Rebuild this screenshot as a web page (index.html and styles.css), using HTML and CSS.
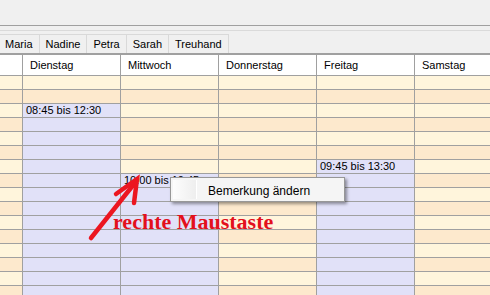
FILE: index.html
```html
<!DOCTYPE html>
<html lang="de">
<head>
    <meta charset="UTF-8">
    <title>Wochenplan</title>
    <link rel="stylesheet" href="styles.css">
</head>
<body>
    <div class="window">
        <div class="toolbar"></div>

        <div class="tabbar">
            <ul class="tabs">
                <li class="tab">Maria</li>
                <li class="tab">Nadine</li>
                <li class="tab">Petra</li>
                <li class="tab">Sarah</li>
                <li class="tab">Treuhand</li>
            </ul>
        </div>

        <div class="planner">
            <div class="row head">
                <div class="cell"></div>
                <div class="cell">Dienstag</div>
                <div class="cell">Mittwoch</div>
                <div class="cell">Donnerstag</div>
                <div class="cell">Freitag</div>
                <div class="cell">Samstag</div>
            </div>
            <div class="row">
                <div class="cell"></div><div class="cell"></div><div class="cell"></div><div class="cell"></div><div class="cell"></div><div class="cell"></div>
            </div>
            <div class="row alt">
                <div class="cell"></div><div class="cell"></div><div class="cell"></div><div class="cell"></div><div class="cell"></div><div class="cell"></div>
            </div>
            <div class="row">
                <div class="cell"></div><div class="cell busy">08:45 bis 12:30</div><div class="cell"></div><div class="cell"></div><div class="cell"></div><div class="cell"></div>
            </div>
            <div class="row alt">
                <div class="cell"></div><div class="cell busy"></div><div class="cell"></div><div class="cell"></div><div class="cell"></div><div class="cell"></div>
            </div>
            <div class="row">
                <div class="cell"></div><div class="cell busy"></div><div class="cell"></div><div class="cell"></div><div class="cell"></div><div class="cell"></div>
            </div>
            <div class="row alt">
                <div class="cell"></div><div class="cell busy"></div><div class="cell"></div><div class="cell"></div><div class="cell"></div><div class="cell"></div>
            </div>
            <div class="row">
                <div class="cell"></div><div class="cell busy"></div><div class="cell"></div><div class="cell"></div><div class="cell busy">09:45 bis 13:30</div><div class="cell"></div>
            </div>
            <div class="row alt">
                <div class="cell"></div><div class="cell busy"></div><div class="cell busy">10:00 bis 10:45</div><div class="cell"></div><div class="cell busy"></div><div class="cell"></div>
            </div>
            <div class="row">
                <div class="cell"></div><div class="cell busy"></div><div class="cell busy"></div><div class="cell"></div><div class="cell busy"></div><div class="cell"></div>
            </div>
            <div class="row alt">
                <div class="cell"></div><div class="cell busy"></div><div class="cell busy"></div><div class="cell"></div><div class="cell busy"></div><div class="cell"></div>
            </div>
            <div class="row">
                <div class="cell"></div><div class="cell busy"></div><div class="cell busy"></div><div class="cell"></div><div class="cell busy"></div><div class="cell"></div>
            </div>
            <div class="row alt">
                <div class="cell"></div><div class="cell busy"></div><div class="cell busy"></div><div class="cell"></div><div class="cell busy"></div><div class="cell"></div>
            </div>
            <div class="row">
                <div class="cell"></div><div class="cell busy"></div><div class="cell busy"></div><div class="cell"></div><div class="cell busy"></div><div class="cell"></div>
            </div>
            <div class="row alt">
                <div class="cell"></div><div class="cell busy"></div><div class="cell busy"></div><div class="cell"></div><div class="cell busy"></div><div class="cell"></div>
            </div>
            <div class="row">
                <div class="cell"></div><div class="cell busy"></div><div class="cell busy"></div><div class="cell"></div><div class="cell busy"></div><div class="cell"></div>
            </div>
            <div class="row alt">
                <div class="cell"></div><div class="cell busy"></div><div class="cell busy"></div><div class="cell"></div><div class="cell busy"></div><div class="cell"></div>
            </div>
        </div>

        <svg class="arrow" width="490" height="295" viewBox="0 0 490 295">
            <line x1="91" y1="238" x2="134" y2="184" />
            <polyline points="116,194 137,179 134,203" />
        </svg>

        <div class="caption">rechte Maustaste</div>

        <div class="context-menu">
            <div class="menu-gutter"></div>
            <div class="menu-label">Bemerkung ändern</div>
        </div>
    </div>
</body>
</html>
```

FILE: styles.css
```css
* {
    margin: 0;
    padding: 0;
    box-sizing: border-box;
}

body {
    width: 490px;
    height: 295px;
    overflow: hidden;
    background: #f0f0f0;
    font-family: "Liberation Sans", Arial, sans-serif;
    font-size: 11px;
    color: #000000;
}

.window {
    position: relative;
    height: 295px;
    overflow: hidden;
}

.toolbar {
    height: 26px;
    border-bottom: 1px solid #a0a0a0;
}

.tabbar {
    padding-top: 4px;
}

.tabs {
    display: flex;
    list-style: none;
    height: 23px;
    padding-top: 3px;
    border-top: 1px solid #dadada;
}

.tab {
    height: 19px;
    line-height: 18px;
    padding: 0 6px;
    margin-left: -1px;
    background: #f0f0f0;
    border: 1px solid #d9d9d9;
    border-bottom: none;
    white-space: nowrap;
}

.tab:first-child {
    margin-left: -2px;
}

.planner {
    border-top: 2px solid #a0a0a0;
}

.row {
    display: grid;
    grid-template-columns: 23px repeat(5, 98px);
    background: #fff5dc;
}

.row.alt {
    background: #fde9cd;
}

.cell {
    height: 14px;
    line-height: 13px;
    padding-left: 3px;
    border-right: 1px solid #a0a0a0;
    border-bottom: 1px solid #a0a0a0;
    white-space: nowrap;
    overflow: hidden;
}

.cell.busy {
    background: #e1e1f8;
}

.row.head {
    background: #ffffff;
}

.row.head .cell {
    height: 21px;
    line-height: 20px;
    padding-left: 7px;
}

.arrow {
    position: absolute;
    left: 0;
    top: 0;
    pointer-events: none;
}

.arrow line,
.arrow polyline {
    fill: none;
    stroke: #ec1620;
    stroke-width: 4.5;
    stroke-linecap: round;
    stroke-linejoin: miter;
}

.caption {
    position: absolute;
    left: 113px;
    top: 211px;
    font-family: "Liberation Serif", "Times New Roman", serif;
    font-weight: 700;
    font-size: 22px;
    line-height: 1;
    color: #e3101c;
    white-space: nowrap;
}

.context-menu {
    position: absolute;
    left: 170px;
    top: 177px;
    width: 175px;
    height: 25px;
    display: flex;
    padding: 2px;
    background: #f5f5f5;
    border: 1px solid #979797;
    box-shadow: 2px 2px 3px rgba(0, 0, 0, 0.4);
}

.menu-gutter {
    width: 24px;
    background: linear-gradient(to right, #fdfdfd, #eeeeee);
    border-right: 1px solid #ffffff;
}

.menu-label {
    padding-left: 11px;
    line-height: 22px;
    font-size: 12px;
    white-space: nowrap;
}
```
